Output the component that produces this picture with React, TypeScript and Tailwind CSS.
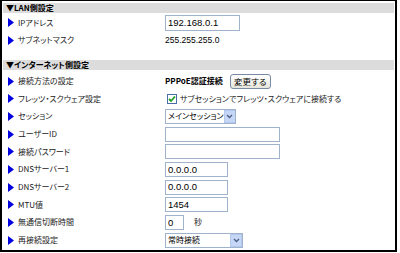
import type { ReactNode } from "react";

const jp = "font-['Noto_Sans_CJK_JP','Noto_Sans',sans-serif] [font-feature-settings:'palt']";

function Marker() {
  return (
    <svg width="6" height="9" viewBox="0 0 6 9" className="shrink-0">
      <polygon points="0,0 6,4.5 0,9" fill="#0000e0" />
    </svg>
  );
}

function SectionHeader({ title }: { title: string }) {
  return (
    <div className={`h-[10px] bg-[#dcdcdc] flex items-center pl-[3px] text-[8px] font-bold leading-none text-black ${jp}`}>
      {title}
    </div>
  );
}

function Row({ label, children }: { label: string; children?: ReactNode }) {
  return (
    <div className="h-[17.67px] flex items-center">
      <div className={`w-[162px] flex items-center gap-[4px] pl-[5px] text-[8px] text-[#222] leading-none ${jp}`}>
        <Marker />
        <span>{label}</span>
      </div>
      <div className="flex items-center">{children}</div>
    </div>
  );
}

function Input({ value = "", w, h = "h-[15px]" }: { value?: string; w: string; h?: string }) {
  return (
    <div
      className={`${w} ${h} border border-[#9fb3cd] bg-white flex items-center pl-[2px] text-[9.5px] text-black font-['Liberation_Sans',sans-serif] leading-none`}
    >
      {value}
    </div>
  );
}

function Select({ value, w }: { value: string; w: string }) {
  return (
    <div className={`${w} h-[15px] border border-[#9fb3cd] bg-white flex items-center justify-between overflow-hidden`}>
      <span className={`pl-[2px] whitespace-nowrap text-[8px] text-black leading-none ${jp}`}>{value}</span>
      <div className="w-[12px] h-[13px] shrink-0 bg-[#c6d6f7] border border-[#b4c8ee] flex items-center justify-center">
        <svg width="7" height="5" viewBox="0 0 7 5">
          <polyline points="1,1 3.5,3.5 6,1" fill="none" stroke="#4d6185" strokeWidth="1.4" />
        </svg>
      </div>
    </div>
  );
}

export default function App() {
  return (
    <div className="w-[400px] h-[253px] bg-white">
      <div className="w-[397px] h-[252px] border-t border-l-2 border-r-2 border-b-2 border-black pt-[2px] px-[1px]">
        <SectionHeader title="▼LAN側設定" />
        <div className="h-[1px]" />
        <Row label="IPアドレス">
          <Input value="192.168.0.1" w="w-[75px]" h="h-[16px]" />
        </Row>
        <Row label="サブネットマスク">
          <span className="text-[8.5px] text-black font-['Liberation_Sans',sans-serif]">255.255.255.0</span>
        </Row>
        <div className="h-[11px]" />
        <SectionHeader title="▼インターネット側設定" />
        <div className="h-[2px]" />
        <Row label="接続方法の設定">
          <span className={`text-[8px] font-bold text-black ${jp}`}>PPPoE認証接続</span>
          <button
            className={`ml-[7px] h-[15px] w-[41px] rounded-[3px] border border-[#7a8aa5] bg-gradient-to-b from-white to-[#e6e6dc] text-[8.5px] text-black leading-none ${jp}`}
          >
            変更する
          </button>
        </Row>
        <Row label="フレッツ・スクウェア設定">
          <div className="ml-[2px] w-[10px] h-[10px] border border-[#4a6fa5] bg-white flex items-center justify-center">
            <svg width="8" height="8" viewBox="0 0 8 8">
              <polyline points="1,4 3,6 7,1.5" fill="none" stroke="#21a121" strokeWidth="1.8" />
            </svg>
          </div>
          <span className={`ml-[3px] text-[8px] text-[#222] leading-none ${jp}`}>
            サブセッションでフレッツ・スクウェアに接続する
          </span>
        </Row>
        <Row label="セッション">
          <Select value="メインセッション" w="w-[71px]" />
        </Row>
        <Row label="ユーザーID">
          <Input w="w-[115px]" />
        </Row>
        <Row label="接続パスワード">
          <Input w="w-[115px]" />
        </Row>
        <Row label="DNSサーバー1">
          <Input value="0.0.0.0" w="w-[63px]" />
        </Row>
        <Row label="DNSサーバー2">
          <Input value="0.0.0.0" w="w-[63px]" />
        </Row>
        <Row label="MTU値">
          <Input value="1454" w="w-[63px]" />
        </Row>
        <Row label="無通信切断時間">
          <Input value="0" w="w-[19px]" />
          <span className={`ml-[10px] text-[8px] text-[#222] ${jp}`}>秒</span>
        </Row>
        <Row label="再接続設定">
          <Select value="常時接続" w="w-[78px]" />
        </Row>
      </div>
    </div>
  );
}
